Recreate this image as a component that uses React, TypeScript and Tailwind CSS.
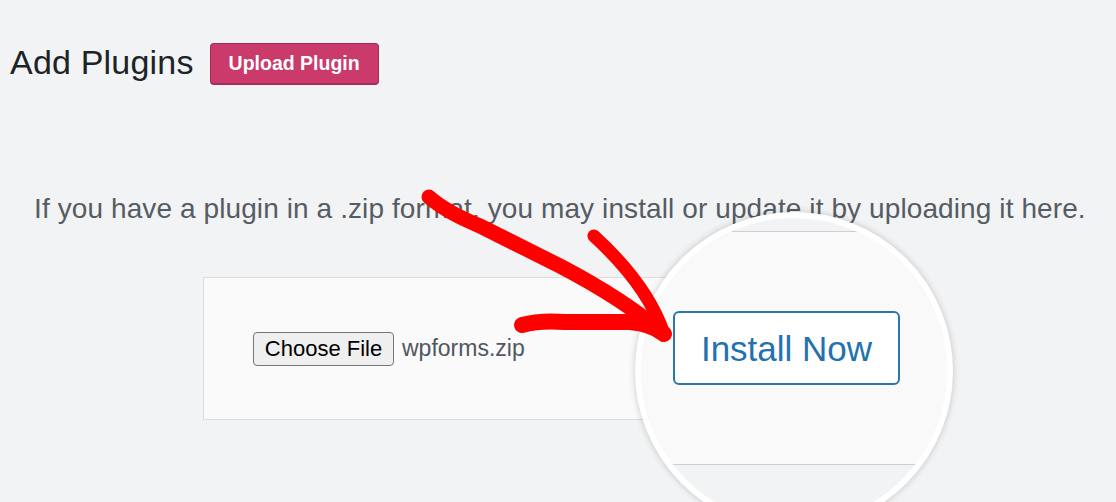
import React from "react";

export default function App() {
  return (
    <div className="relative w-[1116px] h-[502px] overflow-hidden bg-[#f2f3f4] font-['Liberation_Sans',Arial,sans-serif]">
      <div className="flex items-start gap-[16px] pl-[10px] pt-[43px]">
        <h1 className="text-[34px] leading-[38px] text-[#1d2327] tracking-[0.2px]">Add Plugins</h1>
        <button className="h-[42px] w-[169px] rounded-[4px] bg-[#ca3a6b] border border-[#a92b58] border-b-2 text-white text-[19.5px] font-bold leading-none">
          Upload Plugin
        </button>
      </div>

      <p className="mt-[108px] pl-[34px] text-[28px] leading-[32px] text-[#555c63] tracking-[0.1px] whitespace-nowrap">
        If you have a plugin in a .zip format, you may install or update it by uploading it here.
      </p>

      <div className="ml-[203px] mt-[52px] w-[714px] h-[143px] border border-[#dcdcde] bg-[#fafafa] flex items-center pl-[49px]">
        <button className="h-[34px] w-[141px] rounded-[4px] border border-[#767676] bg-[#efefef] text-[22px] leading-none text-black">
          Choose File
        </button>
        <span className="ml-[8px] text-[23px] text-[#50575e]">wpforms.zip</span>
      </div>

      {/* magnifier */}
      <div className="absolute left-[635px] top-[212px] w-[318px] h-[318px] rounded-full border-[6px] border-white bg-[#f2f3f4] overflow-hidden shadow-[0_0_7px_rgba(0,0,0,0.2)]">
        <div className="mt-[13px] h-[234px] border-y border-[#ccd0d4] bg-[#f9f9f9] flex items-center pl-[32px]">
          <button className="w-[227px] h-[74px] rounded-[6px] border-2 border-[#2b77ad] bg-white text-[35px] leading-none text-[#2271b1]">
            Install Now
          </button>
        </div>
      </div>

      {/* red arrow */}
      <svg className="absolute left-0 top-0 pointer-events-none" width="1116" height="502" viewBox="0 0 1116 502">
        <g fill="none" stroke="#ff0000" strokeLinecap="round" strokeLinejoin="round">
          <path d="M429 197 Q 446 212 480 226 L 560 266 Q 625 300 664 334" strokeWidth="15" />
          <path d="M594 236 C 618 258 650 292 664 334" strokeWidth="13" />
          <path d="M522 325 Q 540 320 565 322 L 630 322 Q 652 324 664 334" strokeWidth="16" />
        </g>
      </svg>
    </div>
  );
}
